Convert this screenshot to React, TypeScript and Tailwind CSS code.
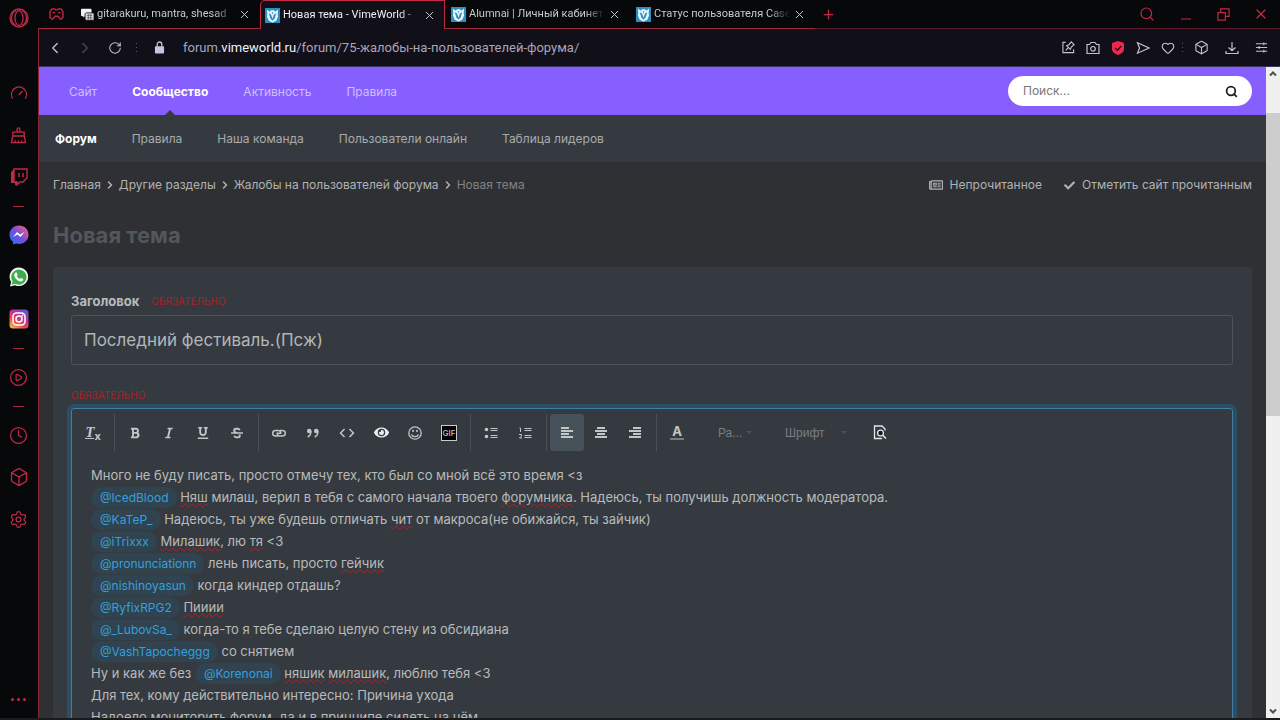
import { useState } from "react";
import type { ReactNode } from "react";
import {
  Box,
  ChevronLeft,
  ChevronRight,
  CirclePlay,
  Clock,
  Gauge,
  Heart,
  Minus,
  Plus,
  RotateCw,
  Search,
  Settings,
  X,
} from "lucide-react";
import { FaBold, FaCheck, FaEye, FaItalic, FaRegNewspaper, FaStrikethrough, FaUnderline } from "react-icons/fa";
import { MdCode } from "react-icons/md";

const tabs = [
  { title: "gitarakuru, mantra, shesad", icon: "chat" },
  { title: "Новая тема - VimeWorld -", icon: "vime", active: true },
  { title: "Alumnai | Личный кабинет", icon: "vime" },
  { title: "Статус пользователя Casey", icon: "vime" },
];

const mainNav = ["Сайт", "Сообщество", "Активность", "Правила"];
const subNav = ["Форум", "Правила", "Наша команда", "Пользователи онлайн", "Таблица лидеров"];
const crumbs = ["Главная", "Другие разделы", "Жалобы на пользователей форума"];

function VimeIcon() {
  return (
    <svg viewBox="0 0 16 16" className="size-[15px] shrink-0">
      <rect width="16" height="16" fill="#2b8fc0" />
      <path d="M2 1.500 5 4l1.500-1.500h3L11 4l3-2.500-.5 5.500.5 2-2 4.500L8 15.500l-4-2L2 9l.5-2z" fill="#eaf6fb" />
      <path d="M4 5.500 6.500 7 8 11.500 9.500 7 12 5.500 10.200 11.500 8 13.700l-2.200-2.200z" fill="#2b8fc0" />
      <path d="M7 4.500h2L8 7z" fill="#2b8fc0" />
    </svg>
  );
}

function ChatIcon() {
  return (
    <svg viewBox="0 0 16 16" className="size-[13px] shrink-0">
      <path d="M1 1h11a1 1 0 0 1 1 1v8H5l-2 2V10H1a1 1 0 0 1-1-1V2a1 1 0 0 1 1-1z" fill="#f2f2f2" />
      <path d="M6 6h9a1 1 0 0 1 1 1v8H6a1 1 0 0 1-1-1V7z" fill="#e4e4e4" stroke="#08090b" />
      <path d="M7 9h7M7 12h7M9 7v7M12 7v7" stroke="#3a3a3a" strokeWidth=".8" />
    </svg>
  );
}

function OperaIcon() {
  return (
    <svg viewBox="0 0 20 20" className="size-5" fill="none" stroke="currentColor" strokeWidth="1.300">
      <circle cx="10" cy="10" r="9" />
      <ellipse cx="10" cy="10" rx="4" ry="7.500" />
      <path d="M7 2.500c-6 3-6 12 0 15M13 2.500c6 3 6 12 0 15" />
    </svg>
  );
}

function CleanerIcon() {
  return (
    <svg viewBox="0 0 18 18" className="size-[17px]" fill="none" stroke="currentColor" strokeWidth="1.400">
      <path d="M7.500 5.500v-3a1.500 1.500 0 0 1 3 0v3M3 5.500h12v4H3zM3 9.500 1.500 16.500h15L15 9.500M5.500 16.500V14M9 16.500V14M12.500 16.500V14" />
    </svg>
  );
}

function TwitchIcon() {
  return (
    <svg viewBox="0 0 18 18" className="size-[18px]">
      <path d="M4 1h13v9l-4 4h-3l-3 3v-3H4z" fill="none" stroke="currentColor" strokeWidth="1.400" />
      <path d="M4 1 1 4v11h4v3l3-4H4z" fill="currentColor" />
      <path d="M9 5v4M13 5v4" stroke="currentColor" strokeWidth="1.500" />
    </svg>
  );
}

function MessengerIcon() {
  return (
    <svg viewBox="0 0 20 20" className="size-5">
      <defs>
        <linearGradient id="messenger" x1="0" y1="1" x2="1" y2="0">
          <stop offset="0" stopColor="#1877f2" />
          <stop offset=".5" stopColor="#7a4be0" />
          <stop offset="1" stopColor="#fb6a6a" />
        </linearGradient>
      </defs>
      <path d="M10 .5c5.500 0 9.500 4 9.500 9.200s-4 9.200-9.500 9.200c-1 0-1.900-.1-2.800-.4L4 19.500v-2.700C1.800 15 .5 12.600.5 9.700.5 4.500 4.500.5 10 .5z" fill="url(#messenger)" />
      <path d="m4 12 4-5 3 2.500L15.500 7l-4 5-3-2.500z" fill="#fff" />
    </svg>
  );
}

function WhatsappIcon() {
  return (
    <svg viewBox="0 0 20 20" className="size-5">
      <path d="M1 19.500 2.200 15A9.300 9.300 0 1 1 6 18.200z" fill="#f3f3f3" />
      <path d="m2.700 17.700.9-3.300a7.600 7.600 0 1 1 2.700 2.400z" fill="#3bae4c" />
      <path d="M7 5.500c.5 0 .7 0 1 .8l.6 1.500c0 .5-.5 1-.9 1.300.8 1.500 1.800 2.300 3.300 3 .4-.5.900-1.200 1.300-1l1.900 1c.2 1.500-.9 2.600-2.500 2.500-3-.3-6.200-3.500-6.500-6.300 0-1.300.7-2.700 1.800-2.800z" fill="#fff" />
    </svg>
  );
}

function InstagramIcon() {
  return (
    <svg viewBox="0 0 20 20" className="size-5">
      <defs>
        <linearGradient id="instagram" x1="0.100" y1="1" x2=".8" y2="0">
          <stop offset="0" stopColor="#f9c04f" />
          <stop offset=".35" stopColor="#ee4b4b" />
          <stop offset=".65" stopColor="#c0329a" />
          <stop offset="1" stopColor="#5a55d6" />
        </linearGradient>
      </defs>
      <rect x=".5" y=".5" width="19" height="19" rx="3.500" fill="url(#instagram)" />
      <g fill="none" stroke="#fff" strokeWidth="1.500">
        <rect x="4" y="4" width="12" height="12" rx="3.500" />
        <circle cx="10" cy="10" r="3" />
      </g>
      <circle cx="13.500" cy="6.500" r=".9" fill="#fff" />
    </svg>
  );
}

function GamepadIcon() {
  return (
    <svg viewBox="0 0 16 13" className="h-3 w-[15px]" fill="none" stroke="currentColor" strokeWidth="1.500">
      <path d="M3 1h3l1 1h2l1-1h3l2 3v6l-2 2h-1l-2.500-3h-3L4 12H3l-2-2V4zM3.500 5h3M9.500 5h3" />
    </svg>
  );
}

function PinEditIcon() {
  return (
    <svg viewBox="0 0 14 14" className="size-[13px]" fill="none" stroke="currentColor" strokeWidth="1.200">
      <path d="M4 1.500H1v11h11.500V9M4 10l3-3M5 5l4 4 1-2.500L13 4l-3-3-2.500 3z" />
    </svg>
  );
}

function CameraIcon() {
  return (
    <svg viewBox="0 0 14 14" className="size-[14px]" fill="none" stroke="currentColor" strokeWidth="1.200">
      <path d="M1 3.500h2.500L5 1.500h4l1.500 2H13v9H1z" />
      <circle cx="7" cy="7.800" r="2.300" />
    </svg>
  );
}

function ShieldIcon() {
  return (
    <svg viewBox="0 0 14 14" className="size-[14px]">
      <path d="M7 0 13 2v6c0 3-3 5-6 6-3-1-6-3-6-6V2z" fill="#f0264f" />
      <path d="m4 7 2.500 2.300L10.300 5" fill="none" stroke="#17101a" strokeWidth="1.300" />
    </svg>
  );
}

function SendIcon() {
  return (
    <svg viewBox="0 0 14 14" className="size-[14px]" fill="none" stroke="currentColor" strokeWidth="1.200">
      <path d="M1.500 1.800 13 7 1.500 12.200 3.500 7z" />
    </svg>
  );
}

function DownloadIcon() {
  return (
    <svg viewBox="0 0 14 14" className="size-[14px]" fill="none" stroke="currentColor" strokeWidth="1.200">
      <path d="M7 1v8.500M3.500 6.500 7 9.800l3.500-3.300M1 10v2.500h12V10" />
    </svg>
  );
}

function SlidersIcon() {
  return (
    <svg viewBox="0 0 14 14" className="size-[13px]" fill="none" stroke="currentColor" strokeWidth="1.200">
      <path d="M1 3h12M1 7h12M1 11h12M9.500 1.500v3M4.500 5.500v3M9.500 9.500v3" />
    </svg>
  );
}

function RestoreIcon() {
  return (
    <svg viewBox="0 0 14 14" className="size-[13px]" fill="none" stroke="currentColor" strokeWidth="1.300">
      <path d="M1 5h8v8H1zM4 5V1h9v8H9" />
    </svg>
  );
}

function LockIcon() {
  return (
    <svg viewBox="0 0 12 14" className="h-[13px] w-[11px]">
      <rect x="1" y="5.500" width="10" height="8" rx="1" fill="#c9c3de" />
      <path d="M3.500 6V3.500a2.500 2.500 0 0 1 5 0V6" fill="none" stroke="#c9c3de" strokeWidth="1.400" />
    </svg>
  );
}

function LinkIcon() {
  return (
    <svg viewBox="0 0 14 10" className="h-[10px] w-[14px]" fill="none" stroke="currentColor" strokeWidth="1.500">
      <path d="M6 8H3.500a2.800 2.800 0 0 1 0-5.600h3a2.500 2.500 0 0 1 2.300 2.100M8 2.400h2.500a2.800 2.800 0 0 1 0 5.600h-3A2.500 2.500 0 0 1 5.200 6M4.500 5.200h5" />
    </svg>
  );
}

function QuoteIcon() {
  return (
    <svg viewBox="0 0 14 10" className="h-[10px] w-[14px]" fill="none" stroke="currentColor">
      <circle cx="3.200" cy="3" r="2.300" fill="currentColor" stroke="none" />
      <circle cx="10.200" cy="3" r="2.300" fill="currentColor" stroke="none" />
      <path d="M4.900 2.800c.2 3-.8 5-3.200 6.200M11.900 2.800c.2 3-.8 5-3.200 6.200" strokeWidth="1.400" />
    </svg>
  );
}

function SmileIcon() {
  return (
    <svg viewBox="0 0 14 14" className="size-[14px]" fill="none" stroke="currentColor" strokeWidth="1.300">
      <circle cx="7" cy="7" r="6.200" />
      <path d="M3.500 8.500c1 2.800 6 2.800 7 0" />
      <path d="M5 3.800V6M9 3.800V6" strokeWidth="1.500" />
    </svg>
  );
}

function BulletsIcon() {
  return (
    <svg viewBox="0 0 14 12" className="h-3 w-[14px]" stroke="currentColor" fill="currentColor">
      <circle cx="2.500" cy="2.500" r="1.800" stroke="none" />
      <circle cx="2.500" cy="9.500" r="1.800" stroke="none" />
      <path d="M6.500 1.500h7M6.500 3.500h7M6.500 8.500h7M6.500 10.500h7" />
    </svg>
  );
}

function NumbersIcon() {
  return (
    <svg viewBox="0 0 14 12" className="h-3 w-[14px]" stroke="currentColor" fill="none">
      <path d="M1.500 1h1v4M1 7.500h2.500v1.500L1.500 11h2.500M6.500 1.500h7M6.500 3.500h7M6.500 8.500h7M6.500 10.500h7" />
    </svg>
  );
}

function AlignIcon({ d }: { d: string }) {
  return (
    <svg viewBox="0 0 12 11" className="h-[11px] w-3" stroke="currentColor" strokeWidth="2">
      <path d={d} />
    </svg>
  );
}

function PreviewIcon() {
  return (
    <svg viewBox="0 0 14 15" className="h-[15px] w-[14px]" fill="none" stroke="#e4e6e7" strokeWidth="1.300">
      <path d="M12 5.500V4L9 1H1.500v12.500H9" />
      <circle cx="7.500" cy="8" r="2.900" fill="#15181a" />
      <path d="m9.700 10.200 3.300 3.300" strokeWidth="1.600" />
    </svg>
  );
}

function Dots() {
  return (
    <span className="flex w-px flex-col gap-[3px]">
      <span className="h-px bg-[#5a5666]" />
      <span className="h-px bg-[#5a5666]" />
      <span className="h-px bg-[#5a5666]" />
    </span>
  );
}

function SideButton({ label, children }: { label: string; children: ReactNode }) {
  return (
    <button aria-label={label} className="flex h-[42px] w-full items-center justify-center">
      {children}
    </button>
  );
}

function SideDash() {
  return (
    <div className="flex h-4 items-center justify-center">
      <span className="h-px w-[11px] bg-[#a8283d]" />
    </div>
  );
}

function Sidebar() {
  return (
    <aside className="flex w-[38px] shrink-0 flex-col bg-[#07080a] pr-px text-[#c02a48]">
      <button aria-label="Opera" className="mb-9 flex h-9 items-center justify-center">
        <OperaIcon />
      </button>
      <SideButton label="GX Control">
        <Gauge size={18} strokeWidth={1.700} />
      </SideButton>
      <SideButton label="GX Cleaner">
        <CleanerIcon />
      </SideButton>
      <SideButton label="Twitch">
        <TwitchIcon />
      </SideButton>
      <SideDash />
      <SideButton label="Messenger">
        <MessengerIcon />
      </SideButton>
      <SideButton label="WhatsApp">
        <WhatsappIcon />
      </SideButton>
      <SideButton label="Instagram">
        <InstagramIcon />
      </SideButton>
      <SideDash />
      <SideButton label="Player">
        <CirclePlay size={19} strokeWidth={1.600} />
      </SideButton>
      <SideDash />
      <SideButton label="History">
        <Clock size={19} strokeWidth={1.600} />
      </SideButton>
      <SideButton label="Extensions">
        <Box size={20} strokeWidth={1.600} />
      </SideButton>
      <SideButton label="Settings">
        <Settings size={19} strokeWidth={1.600} />
      </SideButton>
      <button aria-label="More" className="mt-auto flex h-[38px] items-center justify-center gap-[3px]">
        <span className="size-[3px] rounded-full bg-current" />
        <span className="size-[3px] rounded-full bg-current" />
        <span className="size-[3px] rounded-full bg-current" />
      </button>
    </aside>
  );
}

function TabBar() {
  return (
    <div className="flex h-[29px] shrink-0 bg-[#07080a] text-[#c02a48]">
      <button aria-label="GX Corner" className="flex w-[37px] items-center justify-center border-b border-[#b02a40]">
        <GamepadIcon />
      </button>
      {tabs.map((tab) => (
        <div
          key={tab.title}
          className={`flex w-[185px] items-center gap-[3px] ${
            tab.active
              ? "rounded-tl-[5px] border-x border-t border-[#c02a45] bg-[#110f18] pl-1 pr-2"
              : "border-b border-[#a0263b] pl-[6px] pr-[9px]"
          }`}
        >
          {tab.icon === "vime" ? <VimeIcon /> : <ChatIcon />}
          <button
            className={`min-w-0 flex-1 whitespace-nowrap text-left font-[Roboto,'Open_Sans',sans-serif] text-[11px] [mask-image:linear-gradient(to_right,black_85%,transparent)] ${
              tab.active ? "text-[#f1eff6]" : "text-[#c9c9cc]"
            }`}
          >
            {tab.title}
          </button>
          <button aria-label="Закрыть вкладку" className="text-[#c8c8cc]">
            <X size={13} strokeWidth={1.800} />
          </button>
        </div>
      ))}
      <div className="flex flex-1 items-center border-b border-[#5a1a29] pl-[6px] pr-[11px]">
        <button aria-label="Новая вкладка">
          <Plus size={15} strokeWidth={2} />
        </button>
        <div className="ml-auto flex items-center gap-[23px]">
          <button aria-label="Поиск вкладок">
            <Search size={16} strokeWidth={1.800} />
          </button>
          <button aria-label="Свернуть" className="pt-[10px]">
            <Minus size={16} strokeWidth={1.800} />
          </button>
          <button aria-label="Развернуть">
            <RestoreIcon />
          </button>
          <button aria-label="Закрыть">
            <X size={16} strokeWidth={1.800} />
          </button>
        </div>
      </div>
    </div>
  );
}

function AddressBar() {
  return (
    <div className="flex h-[37px] shrink-0 items-center bg-[#110f18] pl-[7px] pr-3 text-[#c4bfd2]">
      <button aria-label="Назад">
        <ChevronLeft size={18} strokeWidth={1.800} />
      </button>
      <button aria-label="Вперёд" className="ml-3 text-[#4d4958]">
        <ChevronRight size={18} strokeWidth={1.800} />
      </button>
      <button aria-label="Обновить" className="ml-[14px] mr-[14px]">
        <RotateCw size={14} strokeWidth={1.800} />
      </button>
      <Dots />
      <span className="ml-[17px] mr-[18px]">
        <LockIcon />
      </span>
      <p className="flex-1 font-[Roboto,'Open_Sans',sans-serif] text-[13px] text-[#aaa5b9]">
        forum.<span className="text-[#f3f1fa]">vimeworld.ru</span>/forum/75-жалобы-на-пользователей-форума/
      </p>
      <div className="flex items-center gap-[11px]">
        <button aria-label="Закрепить">
          <PinEditIcon />
        </button>
        <button aria-label="Снимок">
          <CameraIcon />
        </button>
        <button aria-label="Блокировка рекламы">
          <ShieldIcon />
        </button>
        <button aria-label="Отправить">
          <SendIcon />
        </button>
        <button aria-label="В избранное" className="-mr-1">
          <Heart size={14} strokeWidth={1.900} />
        </button>
        <Dots />
        <button aria-label="Расширения">
          <Box size={15} strokeWidth={1.800} />
        </button>
        <button aria-label="Загрузки" className="mx-[5px]">
          <DownloadIcon />
        </button>
        <button aria-label="Настройка">
          <SlidersIcon />
        </button>
      </div>
    </div>
  );
}

function ForumHeader() {
  return (
    <header>
      <div className="flex h-12 items-center justify-between bg-[#875fff] pl-[30px] pr-[14px]">
        <nav className="flex h-full gap-[35px]">
          {mainNav.map((item) => (
            <a
              key={item}
              href="#"
              className={`relative flex items-center pt-px ${
                item === "Сообщество" ? "font-bold text-white" : "text-[#cdbfff]"
              }`}
            >
              {item}
              {item === "Сообщество" && (
                <span className="absolute bottom-0 left-1/2 -translate-x-1/2 border-x-[5px] border-b-[5px] border-x-transparent border-b-[#353a40]" />
              )}
            </a>
          ))}
        </nav>
        <form className="flex h-[30px] w-[244px] items-center rounded-full bg-white pl-[15px] pr-[14px]">
          <input
            type="search"
            aria-label="Поиск"
            placeholder="Поиск..."
            className="min-w-0 flex-1 bg-transparent outline-none placeholder:text-[#777]"
          />
          <button type="button" aria-label="Найти" className="text-[#1d1d1d]">
            <Search size={13} strokeWidth={3.200} />
          </button>
        </form>
      </div>
      <nav className="flex h-12 items-center gap-[35px] border-b border-[#2b2d30] bg-[#353a40] pl-4 pt-px">
        {subNav.map((item) => (
          <a key={item} href="#" className={item === "Форум" ? "font-bold text-white" : "text-[#a8abad]"}>
            {item}
          </a>
        ))}
      </nav>
    </header>
  );
}

function ToolButton({ label, active, children }: { label: string; active?: boolean; children: ReactNode }) {
  return (
    <button
      type="button"
      aria-label={label}
      className={`flex h-[37px] w-[34px] items-center justify-center rounded-[3px] ${active ? "bg-[#46515a]" : ""}`}
    >
      {children}
    </button>
  );
}

function Separator() {
  return <span className="ml-1 mr-[3px] h-[37px] w-px bg-[#4b5157]" />;
}

function Caret() {
  return <span className="border-x-[3px] border-t-[3px] border-x-transparent border-t-[#4c5156]" />;
}

function Toolbar() {
  return (
    <div className="flex items-center px-1 pt-[5px] text-[#c3c6c7]">
      <ToolButton label="Убрать форматирование">
        <span className="border-b border-current font-['Liberation_Serif',serif] text-[15px] font-bold italic leading-[12px]">T</span>
        <span className="-mb-2 text-[11px] font-bold leading-none">x</span>
      </ToolButton>
      <Separator />
      <ToolButton label="Полужирный">
        <FaBold size={12} />
      </ToolButton>
      <ToolButton label="Курсив">
        <FaItalic size={12} />
      </ToolButton>
      <ToolButton label="Подчёркнутый">
        <FaUnderline size={12} />
      </ToolButton>
      <ToolButton label="Зачёркнутый">
        <FaStrikethrough size={12} />
      </ToolButton>
      <Separator />
      <ToolButton label="Ссылка">
        <LinkIcon />
      </ToolButton>
      <ToolButton label="Цитата">
        <QuoteIcon />
      </ToolButton>
      <ToolButton label="Код">
        <MdCode size={18} />
      </ToolButton>
      <ToolButton label="Спойлер">
        <FaEye size={15} color="#eceeee" />
      </ToolButton>
      <ToolButton label="Эмодзи">
        <SmileIcon />
      </ToolButton>
      <ToolButton label="GIF">
        <span className="flex size-4 items-center justify-center border border-[#c9cccd] bg-black text-[8px] font-medium leading-none">
          GIF
        </span>
      </ToolButton>
      <Separator />
      <ToolButton label="Маркированный список">
        <BulletsIcon />
      </ToolButton>
      <ToolButton label="Нумерованный список">
        <NumbersIcon />
      </ToolButton>
      <Separator />
      <ToolButton label="По левому краю" active>
        <AlignIcon d="M0 1h8M0 4h12M0 7h8M0 10h12" />
      </ToolButton>
      <ToolButton label="По центру">
        <AlignIcon d="M2 1h8M0 4h12M2 7h8M0 10h12" />
      </ToolButton>
      <ToolButton label="По правому краю">
        <AlignIcon d="M4 1h8M0 4h12M4 7h8M0 10h12" />
      </ToolButton>
      <Separator />
      <ToolButton label="Цвет текста">
        <span className="w-[14px] border-b-2 border-[#777c80] text-center text-[13px] font-bold leading-[13px]">A</span>
      </ToolButton>
      <div className="ml-6 flex items-center">
        <select
          aria-label="Размер"
          className="w-7 appearance-none bg-transparent font-['Liberation_Sans',sans-serif] text-[12px] text-[#7a7e82] outline-none"
        >
          <option>Ра...</option>
        </select>
        <Caret />
      </div>
      <div className="ml-[33px] flex items-center">
        <select
          aria-label="Шрифт"
          className="w-14 appearance-none bg-transparent font-['Liberation_Sans',sans-serif] text-[12px] text-[#7a7e82] outline-none"
        >
          <option>Шрифт</option>
        </select>
        <Caret />
      </div>
      <span className="w-4" />
      <ToolButton label="Предпросмотр">
        <PreviewIcon />
      </ToolButton>
    </div>
  );
}

function Mention({ name }: { name: string }) {
  return (
    <a href="#" className="rounded-full bg-[#2f4350] py-[3px] pl-[9px] pr-2 text-[12px] leading-4 text-[#36a0dd]">
      @{name}
    </a>
  );
}

// word marked by the spell checker
function Typo({ children }: { children: ReactNode }) {
  return <span className="underline decoration-[#a82228] decoration-wavy decoration-1 underline-offset-1">{children}</span>;
}

function Message() {
  return (
    <div
      role="textbox"
      aria-label="Сообщение"
      contentEditable
      suppressContentEditableWarning
      spellCheck={false}
      className="px-[19px] pt-[13px] text-[13px] leading-[22px] text-[#b9bbbb] outline-none"
    >
      <p>Много не буду писать, просто отмечу тех, кто был со мной всё это время &lt;з</p>
      <p>
        <Mention name="IcedBlood" /> <Typo>Няш</Typo> милаш, верил в тебя с самого начала твоего <Typo>форумника</Typo>. Надеюсь, ты
        получишь должность модератора.
      </p>
      <p>
        <Mention name="KaTeP_" /> Надеюсь, ты уже будешь отличать <Typo>чит</Typo> от макроса(не обижайся, ты зайчик)
      </p>
      <p>
        <Mention name="iTrixxx" /> <Typo>Милашик</Typo>, лю <Typo>тя</Typo> &lt;3
      </p>
      <p>
        <Mention name="pronunciationn" /> лень писать, просто <Typo>гейчик</Typo>
      </p>
      <p>
        <Mention name="nishinoyasun" /> когда киндер отдашь?
      </p>
      <p>
        <Mention name="RyfixRPG2" /> <Typo>Пииии</Typo>
      </p>
      <p>
        <Mention name="_LubovSa_" /> когда-то я тебе сделаю целую стену из обсидиана
      </p>
      <p>
        <Mention name="VashTapocheggg" /> со снятием
      </p>
      <p>
        Ну и как же без <Mention name="Korenonai" /> <Typo>няшик</Typo> <Typo>милашик</Typo>, люблю тебя &lt;3
      </p>
      <p>Для тех, кому действительно интересно: Причина ухода</p>
      <p>
        Надоело <Typo>мониторить</Typo> форум, да и в принципе сидеть на нём
      </p>
    </div>
  );
}

function TopicForm() {
  const [title, setTitle] = useState("Последний фестиваль.(Псж)");

  return (
    <form className="rounded-[4px] bg-[#353a40] pl-[18px] pr-[19px] pt-6">
      <div className="flex items-center gap-3 leading-5">
        <label htmlFor="topic-title" className="text-[13px] font-bold text-[#b9bbbc]">
          Заголовок
        </label>
        <span className="text-[10px] text-[#a3242a]">ОБЯЗАТЕЛЬНО</span>
      </div>
      <input
        id="topic-title"
        value={title}
        onChange={(e) => setTitle(e.target.value)}
        className="mt-1 h-[50px] w-full rounded-[3px] border border-[#4d535c] bg-transparent px-3 text-[17px] text-[#b3b6b7] outline-none"
      />
      <p className="mt-5 text-[10px] leading-5 text-[#a3242a]">ОБЯЗАТЕЛЬНО</p>
      <div className="mt-[3px] rounded-[3px] border border-[#437ea0] pb-10 ring-4 ring-[#2e4e64]">
        <Toolbar />
        <Message />
      </div>
    </form>
  );
}

function ForumPage() {
  return (
    <div className="min-w-0 flex-1 overflow-hidden bg-[#2e3033] font-[Inter,'Open_Sans',sans-serif] text-[12px]">
      <ForumHeader />
      <main className="px-[14px]">
        <div className="flex h-11 items-center justify-between text-[#b0b2b3]">
          <nav className="flex items-center">
            {crumbs.map((crumb) => (
              <span key={crumb} className="flex items-center">
                <a href="#">{crumb}</a>
                <ChevronRight size={12} strokeWidth={3} className="mx-[3px]" />
              </span>
            ))}
            <span className="text-[#7f8284]">Новая тема</span>
          </nav>
          <div className="flex items-center gap-[22px]">
            <a href="#" className="flex items-center gap-[7px]">
              <FaRegNewspaper size={14} />
              Непрочитанное
            </a>
            <a href="#" className="flex items-center gap-[7px]">
              <FaCheck size={11} />
              Отметить сайт прочитанным
            </a>
          </div>
        </div>
        <h1 className="mb-4 mt-3 text-[22px] font-bold leading-8 text-[#53575b]">Новая тема</h1>
        <TopicForm />
      </main>
    </div>
  );
}

function Scrollbar() {
  return (
    <div className="flex w-[14px] shrink-0 flex-col items-center bg-[#f0f0ef]">
      <svg viewBox="0 0 14 14" className="size-[14px]" fill="none" stroke="#505050" strokeWidth="2">
        <path d="m4 8.500 3-3 3 3" />
      </svg>
      <div className="mt-8 h-[303px] w-full bg-[#cdcdcd]" />
      <svg viewBox="0 0 14 14" className="mt-auto size-[14px]" fill="none" stroke="#505050" strokeWidth="2">
        <path d="m4 5.500 3 3 3-3" />
      </svg>
    </div>
  );
}

export default function App() {
  return (
    <div className="flex h-screen flex-col overflow-hidden bg-[#1a1b1d]">
      <div className="mb-[2px] flex min-h-0 flex-1">
        <Sidebar />
        <div className="flex min-w-0 flex-1 flex-col">
          <TabBar />
          <div className="flex min-h-0 flex-1 flex-col border-l border-[#8a2336]">
            <AddressBar />
            <div className="flex min-h-0 flex-1 border-t border-[#3a3560]">
              <ForumPage />
              <Scrollbar />
            </div>
          </div>
        </div>
      </div>
    </div>
  );
}
